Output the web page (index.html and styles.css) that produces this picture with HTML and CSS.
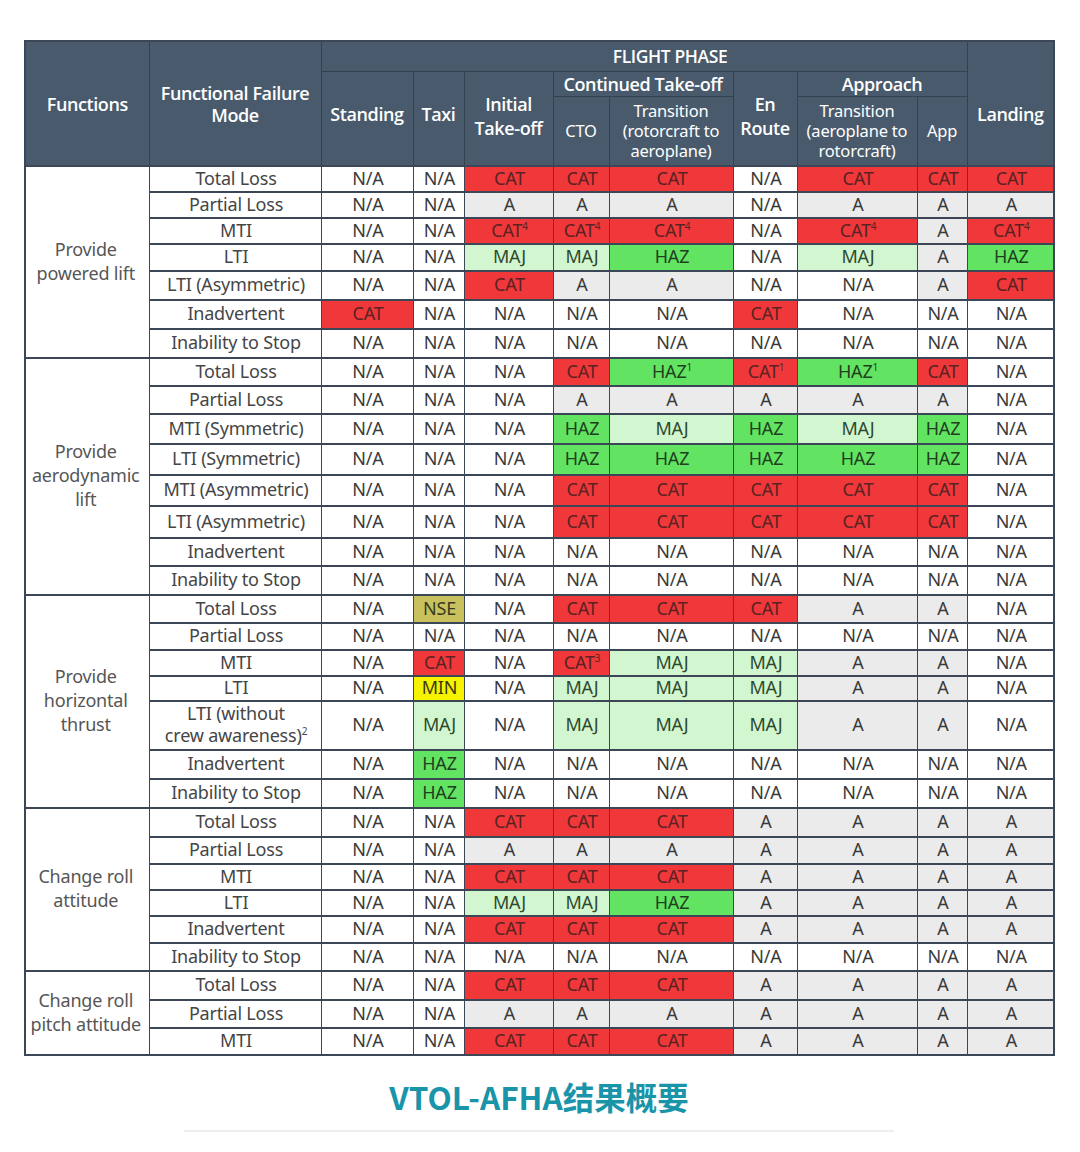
FILE: index.html
```html
<!DOCTYPE html>
<html lang="zh">
<head>
<meta charset="utf-8">
<title>VTOL-AFHA</title>
<link rel="stylesheet" href="styles.css">
</head>
<body>
<div class="page">
<table class="afha">
<colgroup>
<col class="c-func"><col class="c-ffm"><col class="c-stand"><col class="c-taxi"><col class="c-init"><col class="c-cto"><col class="c-tr1"><col class="c-enr"><col class="c-tr2"><col class="c-app"><col class="c-land">
</colgroup>
<thead>
<tr class="hr1">
<th rowspan="3" class="b">Functions</th>
<th rowspan="3" class="b">Functional Failure<br>Mode</th>
<th colspan="8" class="b phase">FLIGHT PHASE</th>
<th rowspan="3" class="b landing">Landing</th>
</tr>
<tr class="hr2">
<th rowspan="2" class="b low">Standing</th>
<th rowspan="2" class="b low">Taxi</th>
<th rowspan="2" class="b low2">Initial<br>Take-off</th>
<th colspan="2" class="b">Continued Take-off</th>
<th rowspan="2" class="b low2">En<br>Route</th>
<th colspan="2" class="b">Approach</th>
</tr>
<tr class="hr3">
<th class="n">CTO</th>
<th class="n">Transition<br>(rotorcraft to<br>aeroplane)</th>
<th class="n">Transition<br>(aeroplane to<br>rotorcraft)</th>
<th class="n">App</th>
</tr>
</thead>
<tbody>
<!-- Provide powered lift -->
<tr class="h26">
<td rowspan="7" class="fn">Provide<br>powered lift</td>
<td class="fm">Total Loss</td>
<td>N/A</td><td>N/A</td><td class="r">CAT</td><td class="r">CAT</td><td class="r">CAT</td><td>N/A</td><td class="r">CAT</td><td class="r">CAT</td><td class="r">CAT</td>
</tr>
<tr class="h26">
<td class="fm">Partial Loss</td>
<td>N/A</td><td>N/A</td><td class="a">A</td><td class="a">A</td><td class="a">A</td><td>N/A</td><td class="a">A</td><td class="a">A</td><td class="a">A</td>
</tr>
<tr class="h26">
<td class="fm">MTI</td>
<td>N/A</td><td>N/A</td><td class="r">CAT<sup>4</sup></td><td class="r">CAT<sup>4</sup></td><td class="r">CAT<sup>4</sup></td><td>N/A</td><td class="r">CAT<sup>4</sup></td><td class="a">A</td><td class="r">CAT<sup>4</sup></td>
</tr>
<tr class="h27">
<td class="fm">LTI</td>
<td>N/A</td><td>N/A</td><td class="lg">MAJ</td><td class="lg">MAJ</td><td class="g">HAZ</td><td>N/A</td><td class="lg">MAJ</td><td class="a">A</td><td class="g">HAZ</td>
</tr>
<tr class="h29">
<td class="fm">LTI (Asymmetric)</td>
<td>N/A</td><td>N/A</td><td class="r">CAT</td><td class="a">A</td><td class="a">A</td><td>N/A</td><td>N/A</td><td class="a">A</td><td class="r">CAT</td>
</tr>
<tr class="h29">
<td class="fm">Inadvertent</td>
<td class="r">CAT</td><td>N/A</td><td>N/A</td><td>N/A</td><td>N/A</td><td class="r">CAT</td><td>N/A</td><td>N/A</td><td>N/A</td>
</tr>
<tr class="h29">
<td class="fm">Inability to Stop</td>
<td>N/A</td><td>N/A</td><td>N/A</td><td>N/A</td><td>N/A</td><td>N/A</td><td>N/A</td><td>N/A</td><td>N/A</td>
</tr>
<!-- Provide aerodynamic lift -->
<tr class="h28">
<td rowspan="8" class="fn">Provide<br>aerodynamic<br>lift</td>
<td class="fm">Total Loss</td>
<td>N/A</td><td>N/A</td><td>N/A</td><td class="r">CAT</td><td class="g">HAZ<sup>1</sup></td><td class="r">CAT<sup>1</sup></td><td class="g">HAZ<sup>1</sup></td><td class="r">CAT</td><td>N/A</td>
</tr>
<tr class="h28">
<td class="fm">Partial Loss</td>
<td>N/A</td><td>N/A</td><td>N/A</td><td class="a">A</td><td class="a">A</td><td class="a">A</td><td class="a">A</td><td class="a">A</td><td>N/A</td>
</tr>
<tr class="h30">
<td class="fm">MTI (Symmetric)</td>
<td>N/A</td><td>N/A</td><td>N/A</td><td class="g">HAZ</td><td class="lg">MAJ</td><td class="g">HAZ</td><td class="lg">MAJ</td><td class="g">HAZ</td><td>N/A</td>
</tr>
<tr class="h31">
<td class="fm">LTI (Symmetric)</td>
<td>N/A</td><td>N/A</td><td>N/A</td><td class="g">HAZ</td><td class="g">HAZ</td><td class="g">HAZ</td><td class="g">HAZ</td><td class="g">HAZ</td><td>N/A</td>
</tr>
<tr class="h31">
<td class="fm">MTI (Asymmetric)</td>
<td>N/A</td><td>N/A</td><td>N/A</td><td class="r">CAT</td><td class="r">CAT</td><td class="r">CAT</td><td class="r">CAT</td><td class="r">CAT</td><td>N/A</td>
</tr>
<tr class="h32">
<td class="fm">LTI (Asymmetric)</td>
<td>N/A</td><td>N/A</td><td>N/A</td><td class="r">CAT</td><td class="r">CAT</td><td class="r">CAT</td><td class="r">CAT</td><td class="r">CAT</td><td>N/A</td>
</tr>
<tr class="h28">
<td class="fm">Inadvertent</td>
<td>N/A</td><td>N/A</td><td>N/A</td><td>N/A</td><td>N/A</td><td>N/A</td><td>N/A</td><td>N/A</td><td>N/A</td>
</tr>
<tr class="h29">
<td class="fm">Inability to Stop</td>
<td>N/A</td><td>N/A</td><td>N/A</td><td>N/A</td><td>N/A</td><td>N/A</td><td>N/A</td><td>N/A</td><td>N/A</td>
</tr>
<!-- Provide horizontal thrust -->
<tr class="h28">
<td rowspan="7" class="fn">Provide<br>horizontal<br>thrust</td>
<td class="fm">Total Loss</td>
<td>N/A</td><td class="nse">NSE</td><td>N/A</td><td class="r">CAT</td><td class="r">CAT</td><td class="r">CAT</td><td class="a">A</td><td class="a">A</td><td>N/A</td>
</tr>
<tr class="h27">
<td class="fm">Partial Loss</td>
<td>N/A</td><td>N/A</td><td>N/A</td><td>N/A</td><td>N/A</td><td>N/A</td><td>N/A</td><td>N/A</td><td>N/A</td>
</tr>
<tr class="h26">
<td class="fm">MTI</td>
<td>N/A</td><td class="r">CAT</td><td>N/A</td><td class="r">CAT<sup>3</sup></td><td class="lg">MAJ</td><td class="lg">MAJ</td><td class="a">A</td><td class="a">A</td><td>N/A</td>
</tr>
<tr class="h25">
<td class="fm">LTI</td>
<td>N/A</td><td class="y">MIN</td><td>N/A</td><td class="lg">MAJ</td><td class="lg">MAJ</td><td class="lg">MAJ</td><td class="a">A</td><td class="a">A</td><td>N/A</td>
</tr>
<tr class="h48">
<td class="fm two">LTI (without<br>crew awareness)<sup>2</sup></td>
<td>N/A</td><td class="lg">MAJ</td><td>N/A</td><td class="lg">MAJ</td><td class="lg">MAJ</td><td class="lg">MAJ</td><td class="a">A</td><td class="a">A</td><td>N/A</td>
</tr>
<tr class="h29">
<td class="fm">Inadvertent</td>
<td>N/A</td><td class="g">HAZ</td><td>N/A</td><td>N/A</td><td>N/A</td><td>N/A</td><td>N/A</td><td>N/A</td><td>N/A</td>
</tr>
<tr class="h29">
<td class="fm">Inability to Stop</td>
<td>N/A</td><td class="g">HAZ</td><td>N/A</td><td>N/A</td><td>N/A</td><td>N/A</td><td>N/A</td><td>N/A</td><td>N/A</td>
</tr>
<!-- Change roll attitude -->
<tr class="h29">
<td rowspan="6" class="fn">Change roll<br>attitude</td>
<td class="fm">Total Loss</td>
<td>N/A</td><td>N/A</td><td class="r">CAT</td><td class="r">CAT</td><td class="r">CAT</td><td class="a">A</td><td class="a">A</td><td class="a">A</td><td class="a">A</td>
</tr>
<tr class="h27">
<td class="fm">Partial Loss</td>
<td>N/A</td><td>N/A</td><td class="a">A</td><td class="a">A</td><td class="a">A</td><td class="a">A</td><td class="a">A</td><td class="a">A</td><td class="a">A</td>
</tr>
<tr class="h26">
<td class="fm">MTI</td>
<td>N/A</td><td>N/A</td><td class="r">CAT</td><td class="r">CAT</td><td class="r">CAT</td><td class="a">A</td><td class="a">A</td><td class="a">A</td><td class="a">A</td>
</tr>
<tr class="h26">
<td class="fm">LTI</td>
<td>N/A</td><td>N/A</td><td class="lg">MAJ</td><td class="lg">MAJ</td><td class="g">HAZ</td><td class="a">A</td><td class="a">A</td><td class="a">A</td><td class="a">A</td>
</tr>
<tr class="h27">
<td class="fm">Inadvertent</td>
<td>N/A</td><td>N/A</td><td class="r">CAT</td><td class="r">CAT</td><td class="r">CAT</td><td class="a">A</td><td class="a">A</td><td class="a">A</td><td class="a">A</td>
</tr>
<tr class="h28">
<td class="fm">Inability to Stop</td>
<td>N/A</td><td>N/A</td><td>N/A</td><td>N/A</td><td>N/A</td><td>N/A</td><td>N/A</td><td>N/A</td><td>N/A</td>
</tr>
<!-- Change roll pitch attitude -->
<tr class="h29">
<td rowspan="3" class="fn">Change roll<br>pitch attitude</td>
<td class="fm">Total Loss</td>
<td>N/A</td><td>N/A</td><td class="r">CAT</td><td class="r">CAT</td><td class="r">CAT</td><td class="a">A</td><td class="a">A</td><td class="a">A</td><td class="a">A</td>
</tr>
<tr class="h28">
<td class="fm">Partial Loss</td>
<td>N/A</td><td>N/A</td><td class="a">A</td><td class="a">A</td><td class="a">A</td><td class="a">A</td><td class="a">A</td><td class="a">A</td><td class="a">A</td>
</tr>
<tr class="h27">
<td class="fm">MTI</td>
<td>N/A</td><td>N/A</td><td class="r">CAT</td><td class="r">CAT</td><td class="r">CAT</td><td class="a">A</td><td class="a">A</td><td class="a">A</td><td class="a">A</td>
</tr>
</tbody>
</table>
<div class="caption">VTOL-AFHA结果概要</div>
<div class="rule"></div>
</div>
</body>
</html>
```

FILE: styles.css
```css
html, body {
  margin: 0;
  padding: 0;
  background: #ffffff;
}

.page {
  padding: 40px 0 0 24px;
  width: 1030px;
  font-family: "Noto Sans", "Noto Sans CJK SC", sans-serif;
}

.afha {
  width: 1029px;
  table-layout: fixed;
  border-collapse: collapse;
  border: 2px solid #3b4756;
}

.c-func { width: 124px; }
.c-ffm { width: 172px; }
.c-stand { width: 92px; }
.c-taxi { width: 51px; }
.c-init { width: 89px; }
.c-cto { width: 56px; }
.c-tr1 { width: 124px; }
.c-enr { width: 64px; }
.c-tr2 { width: 120px; }
.c-app { width: 50px; }
.c-land { width: 87px; }

.afha th {
  background: #485a6b;
  color: #ffffff;
  border: 1px solid #34414f;
  padding: 0;
  text-align: center;
  vertical-align: middle;
  font-family: "Open Sans", "Noto Sans", sans-serif;
  font-size: 18px;
  line-height: 22px;
  letter-spacing: -0.4px;
}

.afha th.b { font-weight: 600; }
.afha th.n { font-family: "Noto Sans", sans-serif; font-weight: 400; font-size: 16.5px; line-height: 20px; letter-spacing: -0.2px; }
.afha th.phase { padding-left: 52px; font-size: 17.5px; }
.afha th.landing { padding-top: 20px; }
.afha th.low { padding-bottom: 8px; }
.afha th.low2 { padding-bottom: 4px; line-height: 24px; }

.hr1 { height: 30px; }
.hr2 { height: 25px; }
.hr3 { height: 70px; }

.afha td {
  border-left: 1px solid #3b4756;
  border-right: 1px solid #3b4756;
  border-top: 2px solid #3b4756;
  border-bottom: 2px solid #3b4756;
  padding: 0 0 3px 2px;
  text-align: center;
  vertical-align: middle;
  font-size: 18px;
  line-height: 20px;
  color: #3a3a3a;
  background: #ffffff;
  letter-spacing: -0.2px;
  white-space: nowrap;
}

.afha td.fn {
  color: #565656;
  line-height: 24px;
  white-space: normal;
  padding: 0 3px 3px 0;
}

.afha td.fm { color: #454545; }
.afha td.two { line-height: 22px; }

.afha sup {
  font-size: 10px;
  line-height: 0;
  vertical-align: 7px;
}

.afha td.r { background: #f0383a; color: #5a2222; }
.afha td.g { background: #62e462; color: #1f3f1f; }
.afha td.lg { background: #d2f6d0; color: #2e4a2e; }
.afha td.a { background: #ebebeb; }
.afha td.nse { background: #c8c15e; color: #3a3a20; }
.afha td.y { background: #f6f200; color: #3a3a10; }

.h25 { height: 25px; }
.h26 { height: 26px; }
.h27 { height: 27px; }
.h28 { height: 28px; }
.h29 { height: 29px; }
.h30 { height: 30px; }
.h31 { height: 31px; }
.h32 { height: 32px; }
.h48 { height: 48px; }

.caption {
  margin-top: 22px;
  text-align: center;
  font-family: "Noto Sans CJK SC", sans-serif;
  font-weight: 700;
  font-size: 31.5px;
  line-height: 36px;
  color: #1a94a9;
}

.rule {
  margin: 16px auto 0;
  width: 710px;
  height: 2px;
  background: #eeeeee;
}
```
